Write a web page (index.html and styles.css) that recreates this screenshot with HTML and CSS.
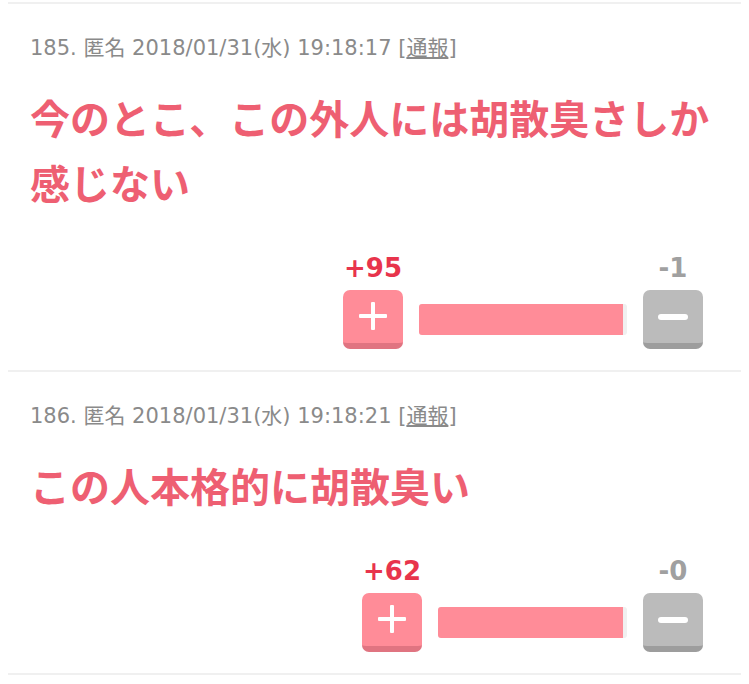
FILE: index.html
```html
<!DOCTYPE html>
<html lang="ja">
<head>
    <meta charset="UTF-8">
    <meta name="viewport" content="width=device-width, initial-scale=1.0">
    <title>コメント</title>
    <link rel="stylesheet" href="styles.css">
</head>
<body>
    <div class="thread">
        <!-- コメント 185 -->
        <div class="comment">
            <div class="comment-head">185. 匿名 2018/01/31(水) 19:18:17 [<a href="#">通報</a>]</div>
            <div class="comment-body">今のとこ、この外人には胡散臭さしか感じない</div>
            <div class="vote">
                <span class="count plus-count">+95</span>
                <span></span>
                <span class="count minus-count">-1</span>
                <button class="btn btn-plus"><span class="plus-sign"></span></button>
                <div class="bar" style="width: 208px;"><div class="bar-fill" style="width: 98%;"></div></div>
                <button class="btn btn-minus"><span class="minus-sign"></span></button>
            </div>
        </div>

        <!-- コメント 186 -->
        <div class="comment">
            <div class="comment-head">186. 匿名 2018/01/31(水) 19:18:21 [<a href="#">通報</a>]</div>
            <div class="comment-body">この人本格的に胡散臭い</div>
            <div class="vote">
                <span class="count plus-count">+62</span>
                <span></span>
                <span class="count minus-count">-0</span>
                <button class="btn btn-plus"><span class="plus-sign"></span></button>
                <div class="bar" style="width: 189px;"><div class="bar-fill" style="width: 98%;"></div></div>
                <button class="btn btn-minus"><span class="minus-sign"></span></button>
            </div>
        </div>
    </div>
</body>
</html>
```

FILE: styles.css
```css
/* Общие стили */
body {
    margin: 0 8px;
    background: #fff;
    font-family: "DejaVu Sans", "Noto Sans CJK JP", sans-serif;
}

.thread {
    margin-top: 2px;
    border-top: 2px solid #f0f0f0;
}

.comment {
    padding: 32px 22px 21px;
    border-bottom: 2px solid #f0f0f0;
}

/* Заголовок комментария */
.comment-head {
    font-size: 21px;
    line-height: 24px;
    color: #8a8a8a;
    white-space: nowrap;
}

.comment-head a {
    color: #8a8a8a;
}

/* Текст комментария */
.comment-body {
    margin-top: 25px;
    font-family: "Noto Sans CJK JP", sans-serif;
    font-weight: bold;
    font-size: 40px;
    line-height: 65px;
    color: #ee5f72;
}

/* Голосование */
.vote {
    margin-top: 38px;
    margin-right: 16px;
    display: grid;
    grid-template-columns: 60px auto 60px;
    justify-content: end;
    align-items: center;
    column-gap: 16px;
    row-gap: 7px;
}

.count {
    font-weight: bold;
    font-size: 26px;
    line-height: 30px;
    text-align: center;
}

.plus-count {
    color: #e8344c;
}

.minus-count {
    color: #a0a0a0;
}

.btn {
    position: relative;
    width: 60px;
    height: 59px;
    padding: 0;
    border: none;
    border-radius: 7px;
    cursor: pointer;
}

.btn-plus {
    background: #ff8c98;
    border-bottom: 6px solid #e07481;
}

.btn-minus {
    background: #bbbbbb;
    border-bottom: 6px solid #9d9d9d;
}

.plus-sign {
    position: absolute;
    left: 16px;
    top: 12px;
    width: 28px;
    height: 28px;
}

.plus-sign::before,
.plus-sign::after {
    content: "";
    position: absolute;
    background: #fff;
    border-radius: 1px;
}

.plus-sign::before {
    left: 0;
    top: 12px;
    width: 28px;
    height: 4px;
}

.plus-sign::after {
    left: 12px;
    top: 0;
    width: 4px;
    height: 28px;
}

.minus-sign {
    position: absolute;
    left: 15px;
    top: 24px;
    width: 30px;
    height: 6px;
    border-radius: 3px;
    background: #fff;
}

.bar {
    height: 31px;
    background: #f0f0f0;
    border-radius: 3px;
    overflow: hidden;
}

.bar-fill {
    height: 100%;
    background: #ff8c98;
}
```
